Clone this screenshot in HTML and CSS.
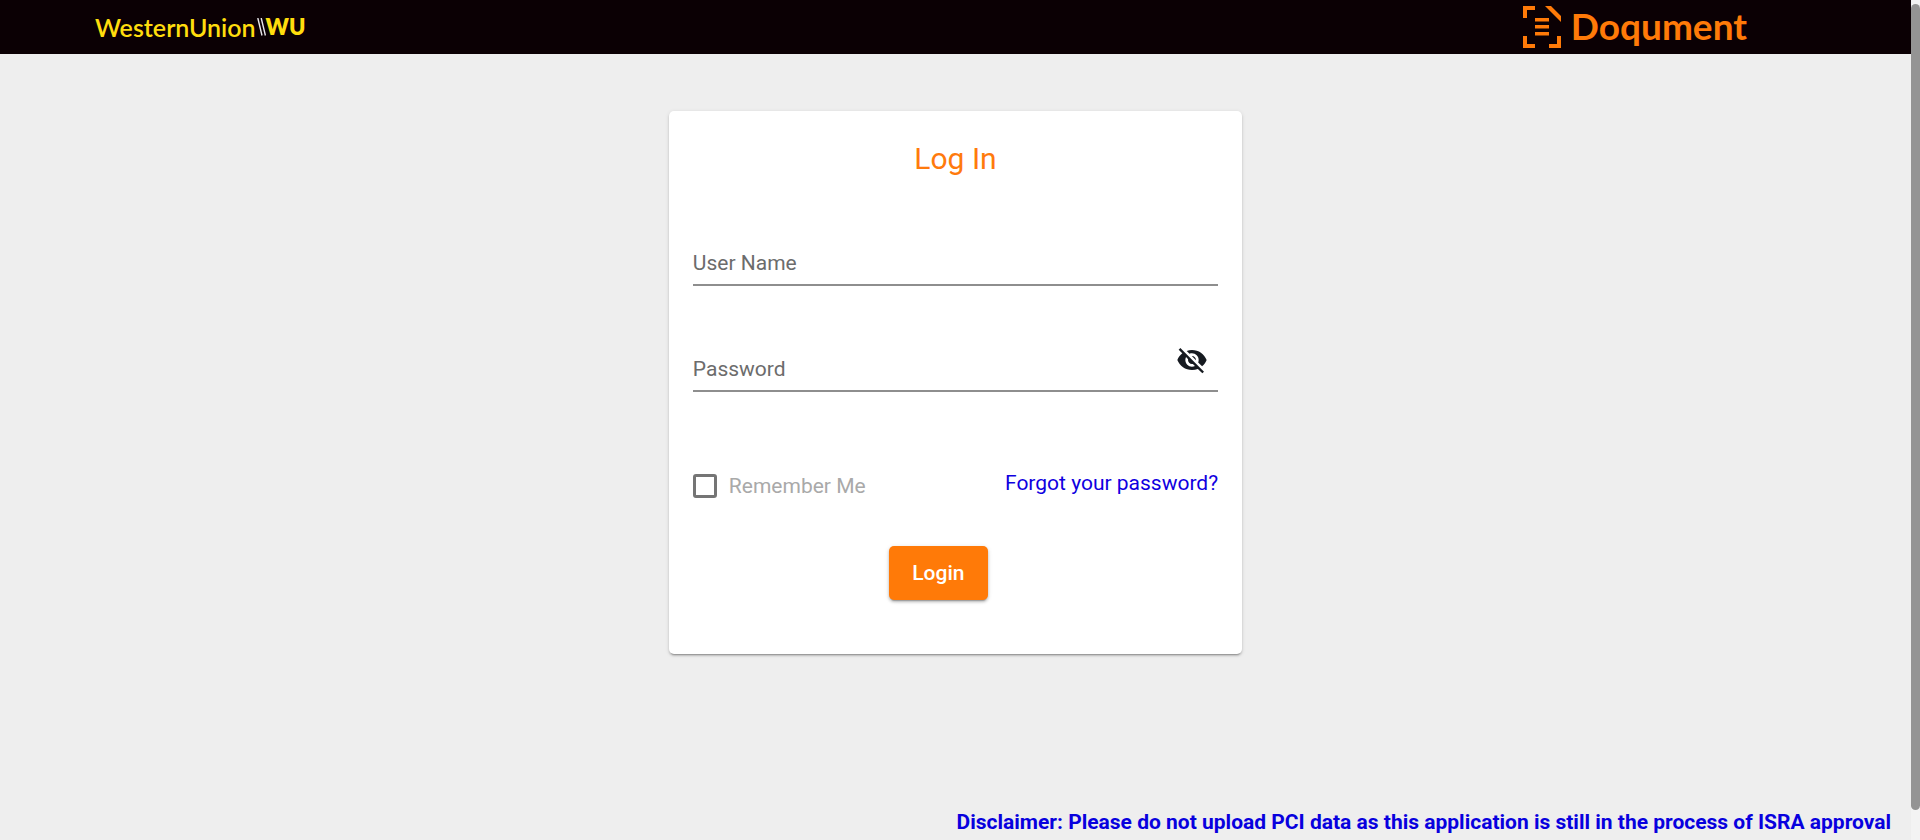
FILE: index.html
```html
<!DOCTYPE html>
<html lang="en">
<head>
<meta charset="utf-8">
<title>Log In</title>
<link rel="stylesheet" href="styles.css">
</head>
<body>
<div class="page">
  <header class="topbar">
    <div class="brand">
      <span class="brand-name">WesternUnion</span>
      <svg class="brand-slashes" width="9" height="18" viewBox="0 0 9 18" fill="none" stroke="#e8e6ea" stroke-width="1.4" aria-hidden="true"><path d="M.8 0 5 17.5M4.2 0 8.4 17.5"/></svg>
      <span class="brand-short">WU</span>
    </div>
    <div class="product">
      <svg width="38" height="42" viewBox="0 0 38 42" fill="#ff7a08" aria-hidden="true">
        <path d="M0 0H12V4H4V12H0ZM0 30H4V38H12V42H0ZM26 38H34V30H38V42H26ZM22 0H28L38 10V16Z"/>
        <path d="M12 12H26V15.500H12ZM12 19H26V22.500H12ZM12 26H26V29.500H12Z"/>
      </svg>
      <span class="product-name">Doqument</span>
    </div>
  </header>
  <main class="content">
    <form class="card">
      <h1 class="card-title">Log In</h1>
      <div class="field">
        <label class="field-label" for="username">User Name</label>
        <input class="field-input" id="username" type="text">
      </div>
      <div class="field">
        <label class="field-label" for="password">Password</label>
        <input class="field-input" id="password" type="password">
        <button class="toggle" type="button" aria-label="Show password">
          <svg width="32" height="32" viewBox="0 0 24 24" fill="#161a20" aria-hidden="true"><path d="M12 7c2.760 0 5 2.240 5 5 0 .65-.13 1.260-.36 1.830l2.920 2.920c1.510-1.260 2.700-2.890 3.430-4.750-1.730-4.390-6-7.500-11-7.500-1.400 0-2.740.25-3.980.7l2.160 2.160C10.740 7.130 11.350 7 12 7zM2 4.270l2.280 2.280.46.46C3.080 8.300 1.780 10.020 1 12c1.730 4.390 6 7.500 11 7.500 1.550 0 3.030-.3 4.380-.84l.42.42L19.730 22 21 20.730 3.270 3 2 4.270zM7.530 9.800l1.550 1.550c-.05.21-.08.43-.08.65 0 1.660 1.340 3 3 3 .22 0 .44-.03.65-.08l1.550 1.550c-.67.33-1.410.53-2.200.53-2.760 0-5-2.240-5-5 0-.79.2-1.530.53-2.200zm4.310-.78l3.150 3.150.02-.16c0-1.660-1.340-3-3-3l-.17.01z"/></svg>
        </button>
      </div>
      <div class="options">
        <label class="remember" for="remember">
          <input class="checkbox" id="remember" type="checkbox">
          <span>Remember Me</span>
        </label>
        <a class="forgot" href="#">Forgot your password?</a>
      </div>
      <button class="login" type="submit">Login</button>
    </form>
  </main>
  <footer class="disclaimer">Disclaimer: Please do not upload PCI data as this application is still in the process of ISRA approval</footer>
</div>
<div class="scrollbar" aria-hidden="true"><div class="thumb"></div></div>
</body>
</html>
```
FILE: styles.css
```css
* { box-sizing: border-box; }

body {
  margin: 0;
  min-height: 100vh;
  display: flex;
  background: #eee;
  font-family: Roboto, "Liberation Sans", sans-serif;
  font-size: 21px;
  line-height: 24px;
}

.page {
  flex: 1;
  display: flex;
  flex-direction: column;
}

.topbar {
  display: flex;
  justify-content: space-between;
  align-items: center;
  height: 54px;
  padding: 0 163px 0 95px;
  background: #0b0004;
}

.brand {
  display: flex;
  align-items: center;
  color: #ffdd0d;
  font-family: Lato, sans-serif;
  font-size: 25px;
  line-height: 36px;
}

.brand-name { font-weight: 600; }
.brand-slashes { margin-left: 1px; }

.brand-short {
  font-size: 22px;
  font-weight: 800;
}

.product {
  display: flex;
  align-items: center;
  gap: 10px;
  color: #ff7a08;
  font-family: Lato, sans-serif;
  font-size: 37px;
  font-weight: 700;
  line-height: 48px;
}

.product-name { padding: 0 1px 2px 0; }

.content {
  flex: 1;
  padding-top: 57px;
}

.card {
  width: 30%;
  min-width: 480px;
  margin: 0 auto;
  padding: 28px 24px 54px;
  background: #fff;
  border-radius: 5px;
  box-shadow: 0 3px 1px -2px rgba(0, 0, 0, .2), 0 2px 2px rgba(0, 0, 0, .14), 0 1px 4px rgba(0, 0, 0, .12);
}

.card-title {
  margin: 0 0 63px;
  color: #ff7a0c;
  font-size: 30px;
  font-weight: 400;
  line-height: 40px;
  text-align: center;
}

.field {
  display: grid;
  grid-template-columns: 1fr auto;
  height: 44px;
  margin-bottom: 62px;
  border-bottom: 2px solid #8e8e8e;
}

.field-label {
  grid-area: 1 / 1;
  padding-top: 9px;
  color: #6c6c6c;
  pointer-events: none;
}

.field-input {
  grid-area: 1 / 1;
  width: 100%;
  padding: 0;
  border: 0;
  outline: 0;
  background: transparent;
  font: inherit;
}

.toggle {
  grid-area: 1 / 2;
  align-self: start;
  width: 52px;
  height: 32px;
  margin-top: -4px;
  padding: 0 10px;
  border: 0;
  background: none;
  cursor: pointer;
}

.toggle svg { display: block; }

.options {
  display: flex;
  justify-content: space-between;
  align-items: flex-end;
  margin-top: 82px;
}

.remember {
  display: flex;
  align-items: center;
  gap: 12px;
  color: #a9a9a9;
}

.checkbox {
  appearance: none;
  width: 24px;
  height: 24px;
  margin: 0;
  border: 3px solid #757575;
  border-radius: 3px;
}

.forgot {
  padding-bottom: 3px;
  margin-top: -3px;
  color: #1000e0;
  text-decoration: none;
}

.login {
  display: block;
  min-width: 99px;
  margin: 48px 0 0 196px;
  padding: 15px 20px;
  border: 0;
  border-radius: 5px;
  background: #ff7a08;
  box-shadow: 0 3px 1px -2px rgba(0, 0, 0, .2), 0 2px 3px rgba(0, 0, 0, .2), 0 1px 5px rgba(0, 0, 0, .12);
  color: #fff;
  font: 500 21px/24px Roboto, sans-serif;
}

.disclaimer {
  padding: 0 20px 6px;
  color: #0800de;
  font-weight: 700;
  text-align: right;
}

.scrollbar {
  display: flex;
  width: 9px;
  padding: 4px 0 30px;
  background: #f3f3f3;
}

.thumb {
  flex: 1;
  border-radius: 5px;
  background: #949494;
}
```
